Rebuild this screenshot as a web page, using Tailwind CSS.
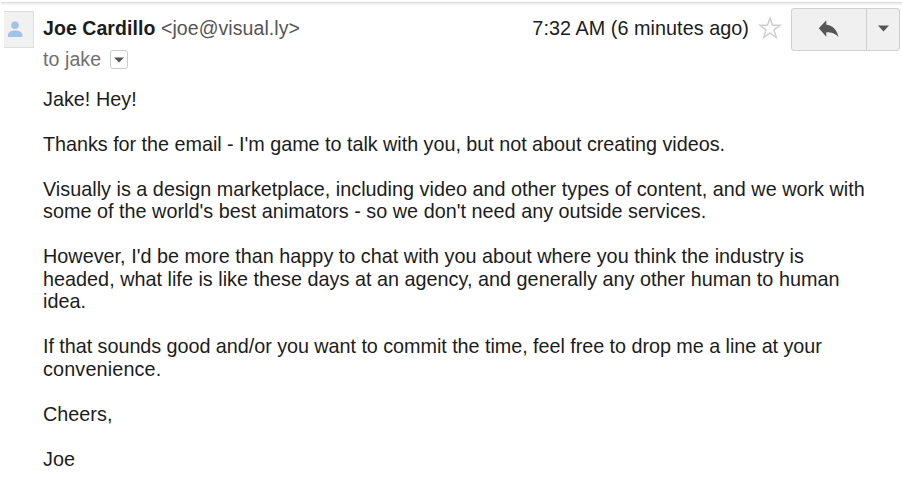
<!DOCTYPE html>
<html lang="en">
    <head>
        <meta charset="UTF-8">
        <title>Joe Cardillo</title>
        <script src="https://cdn.jsdelivr.net/npm/@tailwindcss/browser@4"></script>
    </head>
    <body class="bg-white h-[500px] overflow-hidden font-['Liberation_Sans',Arial,sans-serif] text-[#1c1c1c] text-[19.5px] leading-[22.53px]">
        <div class="mt-0.5 ml-px h-1 border-t border-[#dcdcdc] bg-linear-to-b from-[#ececec] to-white"></div>

        <header class="flex items-start pl-1 pr-0.5 pt-0.5">
            <div class="mt-[3px] w-[30px] h-[37px] shrink-0 bg-[#f1f1f1] border border-l-0 border-[#dedede]">
                <svg class="block" width="29" height="35" viewBox="0 0 29 35" fill="#9fc3e8">
                    <circle cx="11" cy="13.2" r="3.8"/>
                    <path d="M4 25v-2.2c0-2.8 4-4.3 7.2-4.3s7.2 1.5 7.2 4.3V25z"/>
                </svg>
            </div>

            <div class="ml-[9px] mt-[9px] grow whitespace-nowrap">
                <div class="tracking-[0.07px]"><span class="font-bold">Joe Cardillo</span> <span class="text-[#555]">&lt;joe@visual.ly&gt;</span></div>
                <div class="mt-2 flex items-center text-[#6f6f6f]">
                    <span class="tracking-[0.1px]">to jake</span>
                    <button class="ml-[9px] mt-0.5 w-[18px] h-[19px] flex items-center justify-center bg-white border border-[#ccc] rounded-[3px]">
                        <svg width="10" height="6" viewBox="0 0 10 6"><path d="M0 .5h10L5 5.5z" fill="#555"/></svg>
                    </button>
                </div>
            </div>

            <div class="mt-[9px] whitespace-nowrap text-[19.8px] leading-[22.53px] tracking-[0.05px]">7:32 AM (6 minutes ago)</div>

            <svg class="ml-[9px] mt-2 shrink-0" width="24" height="24" viewBox="0 0 24 24" fill="none" stroke="#cfcfcf" stroke-width="1.5">
                <path d="M12 2l2.5 7.3h7.6l-6.1 4.6 2.3 7.7-6.3-4.6-6.3 4.6L8 13.9 1.9 9.3h7.6z"/>
            </svg>

            <div class="ml-[9px] h-[43px] w-[109px] shrink-0 flex bg-[#f0f0f0] border border-[#d0d0d0] rounded-[3px]">
                <button class="w-[75px] flex items-center justify-center border-r border-[#d0d0d0]">
                    <svg class="-mt-0.5" width="22" height="18" viewBox="0 0 22 18" fill="#555">
                        <path d="M.8 8.2L8.3.3v4.5c5.7.4 10.4 4.200 12.200 12.200-3.300-3.500-6.900-4.700-12.200-4.700v4.500z"/>
                    </svg>
                </button>
                <button class="grow flex items-center justify-center">
                    <svg class="-mt-0.5" width="11" height="7" viewBox="0 0 11 7"><path d="M0 .5h11L5.5 6.5z" fill="#555"/></svg>
                </button>
            </div>
        </header>

        <main class="pl-[43px] pt-[17.5px] whitespace-nowrap text-[19.8px] leading-[22.53px] tracking-[0.02px]">
            <p class="mb-[22.53px]">Jake! Hey!</p>
            <p class="mb-[22.53px] tracking-[-0.03px]">Thanks for the email - I'm game to talk with you, but not about creating videos.</p>
            <p class="mb-[22.53px]">Visually is a design marketplace, including video and other types of content, and we work with<br>some of the world's best animators - so we don't need any outside services.</p>
            <p class="mb-[22.53px]">However, I'd be more than happy to chat with you about where you think the industry is<br>headed, what life is like these days at an agency, and generally any other human to human<br>idea.</p>
            <p class="mb-[22.53px] tracking-[-0.045px]">If that sounds good and/or you want to commit the time, feel free to drop me a line at your<br><span class="tracking-[0.15px]">convenience.</span></p>
            <p class="mb-[22.53px]">Cheers,</p>
            <p>Joe</p>
        </main>
    </body>
</html>
